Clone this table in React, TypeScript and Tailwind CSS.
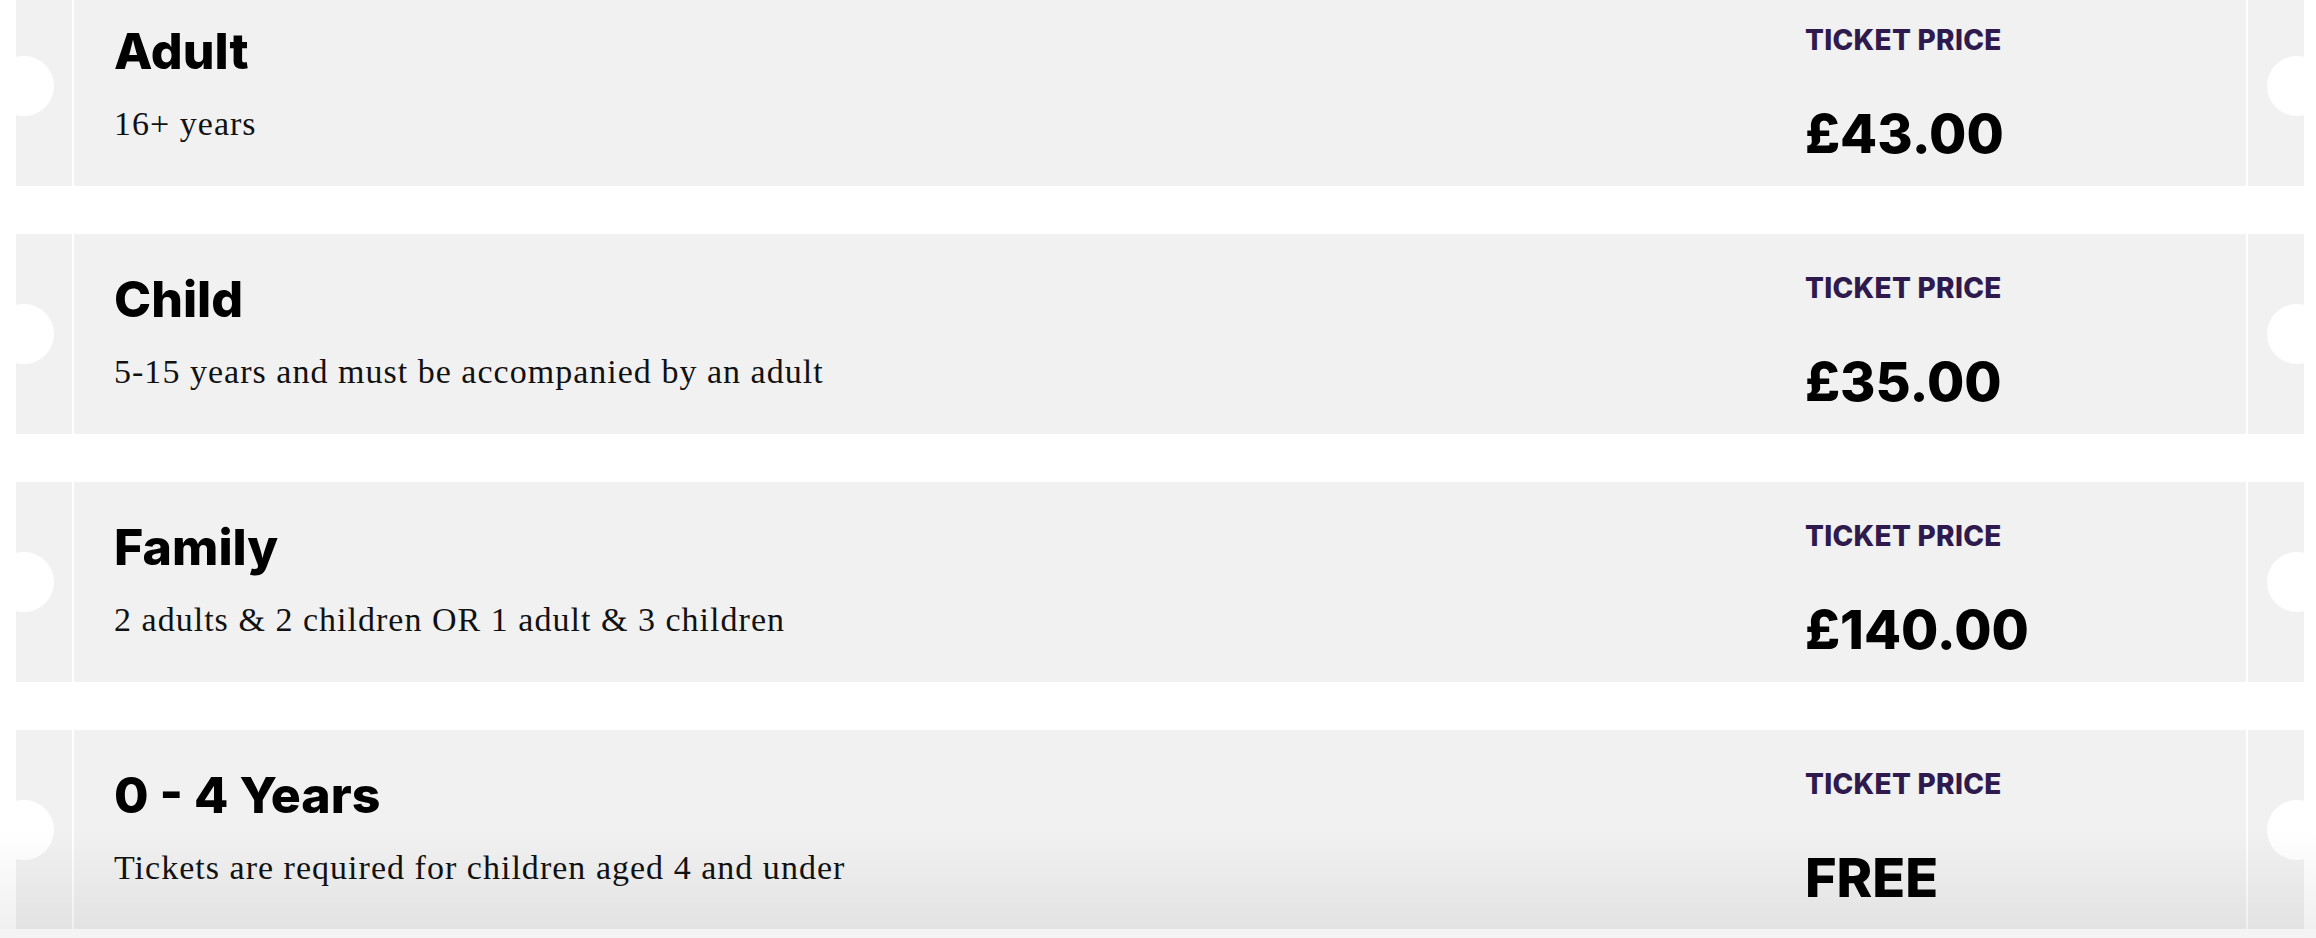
import React from "react";

type Ticket = { title: string; desc: string; price: string };

const tickets: Ticket[] = [
  { title: "Adult", desc: "16+ years", price: "£43.00" },
  { title: "Child", desc: "5-15 years and must be accompanied by an adult", price: "£35.00" },
  { title: "Family", desc: "2 adults & 2 children OR 1 adult & 3 children", price: "£140.00" },
  { title: "0 - 4 Years", desc: "Tickets are required for children aged 4 and under", price: "FREE" },
];

const sans = "font-['Inter','Noto_Sans',sans-serif]";

function TicketCard({ t }: { t: Ticket }) {
  return (
    <div className="relative flex h-[200px] overflow-hidden bg-[#f1f1f1]">
      <div className="w-[56px] shrink-0" />
      <div className="w-[2px] shrink-0 bg-white" />
      <div className="flex flex-1">
        <div className="flex-1 pl-[40px] pt-[40px]">
          <div className={`${sans} text-[50px] leading-[50px] font-extrabold text-black`}>{t.title}</div>
          <div className="mt-[31px] font-['Liberation_Serif',serif] text-[34px] leading-[34px] tracking-[0.03em] text-[#111]">
            {t.desc}
          </div>
        </div>
        <div className="w-[441px] shrink-0 pt-[40px]">
          <div className={`${sans} text-[28px] leading-[28px] font-extrabold tracking-[0.01em] text-[#2e1a4c]`}>TICKET PRICE</div>
          <div className={`${sans} mt-[52px] text-[54px] leading-[55px] font-extrabold text-black`}>{t.price}</div>
        </div>
      </div>
      <div className="w-[2px] shrink-0 bg-white" />
      <div className="w-[56px] shrink-0" />
      <div className="absolute left-[-22px] top-[70px] h-[60px] w-[60px] rounded-full bg-white" />
      <div className="absolute right-[-23px] top-[70px] h-[60px] w-[60px] rounded-full bg-white" />
    </div>
  );
}

export default function App() {
  return (
    <div className="relative h-[938px] w-full overflow-hidden bg-white">
      <div className="-mt-[14px] flex flex-col gap-[48px] pl-[16px] pr-[12px]">
        {tickets.map((t) => (
          <TicketCard key={t.title} t={t} />
        ))}
      </div>
      <div className="pointer-events-none absolute bottom-0 left-0 right-0 flex flex-col">
        <div className="h-[100px] bg-gradient-to-b from-transparent to-black/[0.06]" />
        <div className="h-[9px] bg-[#f4f4f4]" />
      </div>
    </div>
  );
}
